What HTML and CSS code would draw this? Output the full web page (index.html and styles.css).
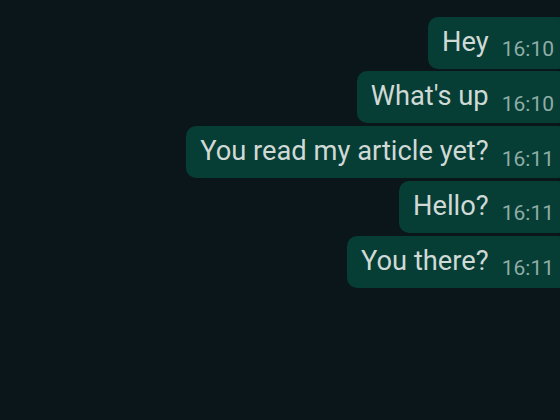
FILE: index.html
```html
<!DOCTYPE html>
<html>
<head>
<meta charset="utf-8">
<link rel="stylesheet" href="styles.css">
</head>
<body>
<div class="chat">
  <div class="bubble"><span class="text">Hey</span><span class="time">16:10</span></div>
  <div class="bubble"><span class="text">What's up</span><span class="time">16:10</span></div>
  <div class="bubble"><span class="text">You read my article yet?</span><span class="time">16:11</span></div>
  <div class="bubble"><span class="text">Hello?</span><span class="time">16:11</span></div>
  <div class="bubble"><span class="text">You there?</span><span class="time">16:11</span></div>
</div>
</body>
</html>
```
FILE: styles.css
```css
html, body {
  margin: 0;
  padding: 0;
  background: #0b161b;
  width: 560px;
  height: 420px;
  overflow: hidden;
  font-family: Roboto, "Noto Sans", sans-serif;
}
.chat {
  display: flex;
  flex-direction: column;
  align-items: flex-end;
  gap: 2.75px;
  padding-top: 16.5px;
  margin-right: -8px;
}
.bubble {
  display: flex;
  align-items: baseline;
  gap: 13px;
  height: 52px;
  box-sizing: border-box;
  padding: 0 14px;
  background: #063d34;
  border-radius: 10px;
  line-height: 52px;
}
.text {
  color: #cfd9d6;
  font-size: 27.3px;
  position: relative;
  top: -1px;
}
.time {
  color: #8fada6;
  font-size: 21px;
  position: relative;
  top: 4.5px;
}
```
